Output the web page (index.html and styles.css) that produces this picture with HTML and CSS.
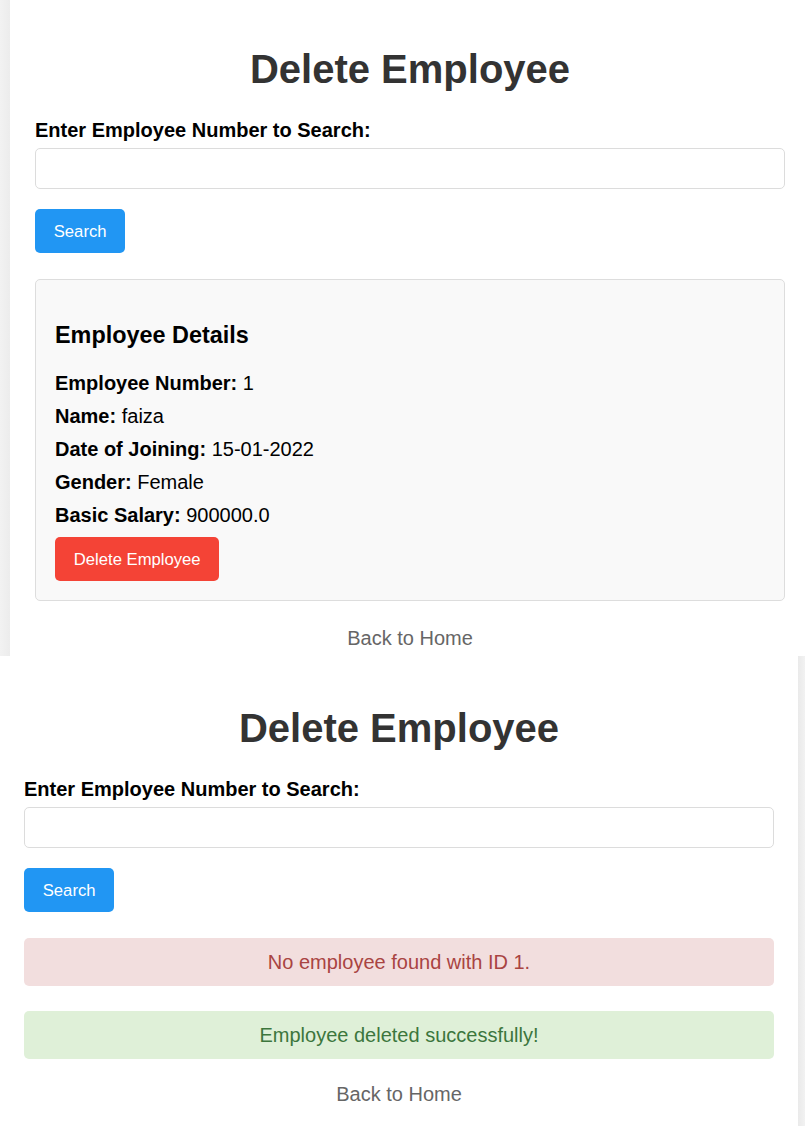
FILE: index.html
```html
<!DOCTYPE html>
<html lang="en">
<head>
<meta charset="utf-8">
<title>Delete Employee</title>
<link rel="stylesheet" href="styles.css">
</head>
<body>
<section class="shot shot-top">
  <div class="gutter gutter-left"></div>
  <main class="panel panel-top">
    <h1 class="title">Delete Employee</h1>
    <label class="field-label" for="emp1">Enter Employee Number to Search:</label>
    <input class="field-input" id="emp1" type="text">
    <button class="btn btn-search">Search</button>
    <div class="details">
      <h3 class="details-title">Employee Details</h3>
      <p class="detail"><strong>Employee Number:</strong> 1</p>
      <p class="detail"><strong>Name:</strong> faiza</p>
      <p class="detail"><strong>Date of Joining:</strong> 15-01-2022</p>
      <p class="detail"><strong>Gender:</strong> Female</p>
      <p class="detail"><strong>Basic Salary:</strong> 900000.0</p>
      <button class="btn btn-delete">Delete Employee</button>
    </div>
    <a class="back back-top" href="#">Back to Home</a>
  </main>
</section>
<section class="shot shot-bottom">
  <main class="panel panel-bottom">
    <h1 class="title title-bottom">Delete Employee</h1>
    <label class="field-label" for="emp2">Enter Employee Number to Search:</label>
    <input class="field-input" id="emp2" type="text">
    <button class="btn btn-search">Search</button>
    <div class="alert alert-error">No employee found with ID 1.</div>
    <div class="alert alert-success">Employee deleted successfully!</div>
    <a class="back back-bottom" href="#">Back to Home</a>
  </main>
  <div class="gutter gutter-right"></div>
</section>
</body>
</html>
```
FILE: styles.css
```css
* { box-sizing: border-box; }

html, body {
  margin: 0;
  padding: 0;
  background: #ffffff;
}

body {
  font-family: "Liberation Sans", Arial, sans-serif;
  color: #000;
  width: 805px;
  height: 1126px;
  overflow: hidden;
}

.shot {
  display: flex;
  width: 805px;
  overflow: hidden;
}

.shot-top { height: 656px; }
.shot-bottom { height: 470px; }

.gutter {
  background: #f0f0f0;
  flex: 0 0 auto;
}
.gutter-left {
  width: 10px;
  background: linear-gradient(to right, #f2f2f2, #ececec);
}
.gutter-right {
  width: 7px;
  background: linear-gradient(to right, #eaeaea, #f2f2f2);
}

.panel {
  flex: 1 1 auto;
  display: flex;
  flex-direction: column;
  align-items: flex-start;
  background: #fff;
  overflow: hidden;
}
.panel > * { flex-shrink: 0; }
.panel-top { padding: 0 20px 0 25px; }
.panel-bottom { padding: 0 24px 0 24px; }

.title {
  align-self: stretch;
  text-align: center;
  font-size: 40px;
  line-height: 46px;
  font-weight: bold;
  color: #333;
  margin: 46px 0 0;
}
.title-bottom { margin-top: 49px; }

.field-label {
  display: block;
  font-size: 20px;
  line-height: 23px;
  font-weight: bold;
  margin-top: 27px;
  color: #000;
}

.field-input {
  align-self: stretch;
  height: 41px;
  margin-top: 6px;
  border: 1px solid #dcdcdc;
  border-radius: 5px;
  background: #fff;
  font-family: inherit;
  font-size: 16.67px;
  padding: 0 12px;
}

.btn {
  font-family: inherit;
  font-size: 16.67px;
  line-height: 19px;
  color: #fff;
  border: none;
  border-radius: 5px;
  padding: 12.5px 18.75px;
  height: 44px;
  cursor: pointer;
}
.btn-search {
  background: #2196f3;
  margin-top: 20px;
}
.btn-delete {
  background: #f44336;
  margin-top: 0;
}

.details {
  align-self: stretch;
  margin-top: 26px;
  background: #f9f9f9;
  border: 1px solid #dddddd;
  border-radius: 5px;
  padding: 19px 19px;
  display: flex;
  flex-direction: column;
  align-items: flex-start;
}
.details > * { flex-shrink: 0; }

.details-title {
  font-size: 23.4px;
  line-height: 27px;
  font-weight: bold;
  margin: 23px 0 23px;
  color: #000;
}

.detail {
  font-size: 20px;
  line-height: 23px;
  margin: 0 0 10px;
  color: #000;
}

.back {
  align-self: stretch;
  display: block;
  text-align: center;
  font-size: 20px;
  line-height: 23px;
  color: #666;
  text-decoration: none;
}
.back-top { margin-top: 26px; }
.back-bottom { margin-top: 24px; }

.alert {
  align-self: stretch;
  text-align: center;
  font-size: 20px;
  line-height: 23px;
  padding: 12.5px 15px;
  border-radius: 5px;
}
.alert-error {
  background: #f2dede;
  color: #a94442;
  margin-top: 26px;
}
.alert-success {
  background: #dff0d8;
  color: #3c763d;
  margin-top: 25px;
}
```
